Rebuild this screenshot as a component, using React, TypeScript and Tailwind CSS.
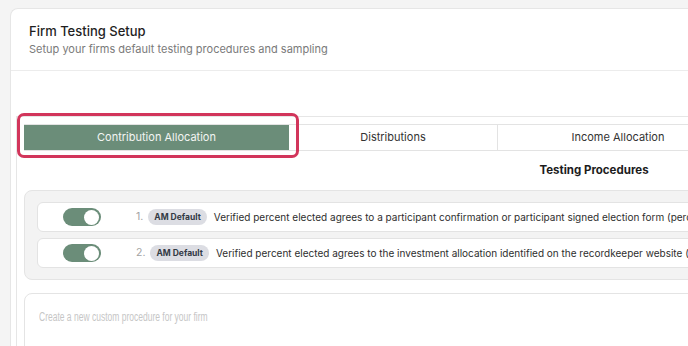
export default function App() {
  const rows = [
    "Verified percent elected agrees to a participant confirmation or participant signed election form (percent elected should agree with contribution allocation percentages)",
    "Verified percent elected agrees to the investment allocation identified on the recordkeeper website (percent elected should agree with contribution allocation percentages)",
  ];

  return (
    <div
      className="relative h-[346px] w-[688px] overflow-hidden bg-[#f4f4f4] pl-[10px] pt-[8px]"
      style={{ fontFamily: "Inter, 'Noto Sans', sans-serif" }}
    >
      <div className="w-[1200px] rounded-tl-lg border-l border-t border-[#e6e6e6] bg-white">
        <div className="border-b border-[#ececec] px-[18px] pb-[12px] pt-[13px]">
          <h1 className="text-[13px] font-medium leading-[18px] text-[#1f1f1f]">Firm Testing Setup</h1>
          <p className="text-[11px] leading-[18px] text-[#7a7a7a]">
            Setup your firms default testing procedures and sampling
          </p>
        </div>

        <div className="pl-[5px] pt-[45px]">
          <div className="border-l border-t border-[#e6e6e6] pl-[7px] pt-[7px]">
            <div className="flex h-[27px] w-[1140px] border-y border-[#e3e3e3] text-[11px]">
              <div className="flex w-[265px] items-center justify-center bg-[#6b8d79] text-[#f3f5f3]">
                Contribution Allocation
              </div>
              <div className="flex w-[209px] items-center justify-center border-r border-[#e3e3e3] text-[#333]">
                Distributions
              </div>
              <div className="flex w-[240px] items-center justify-center text-[#333]">Income Allocation</div>
            </div>

            <div className="flex h-[39px] w-[1140px] items-center justify-center pt-[1px] text-[11.5px] font-bold text-[#1c1c1c]">
              Testing Procedures
            </div>

            <div className="w-[1140px] rounded-lg border border-[#e4e4e4] bg-[#f3f3f3] px-[12px] py-[11px]">
              <div className="flex flex-col gap-[6px]">
                {rows.map((text, i) => (
                  <div
                    key={i}
                    className="flex h-[30px] items-center rounded-md border border-[#e3e3e3] bg-white pl-[25px]"
                  >
                    <div className="flex h-[18px] w-[38px] items-center justify-end rounded-full bg-[#6b8d79] pr-[2px]">
                      <div className="h-[15px] w-[15px] rounded-full bg-white" />
                    </div>
                    <span className="ml-[35px] text-[10.5px] text-[#a3a3a3]">{i + 1}.</span>
                    <span className="ml-[5px] rounded-full bg-[#dcdde3] px-[6px] py-[2px] text-[8.5px] font-bold leading-[12px] text-[#333a45]">
                      AM Default
                    </span>
                    <span className="ml-[7px] whitespace-nowrap text-[10px] text-[#2e2e2e]">{text}</span>
                  </div>
                ))}
              </div>
            </div>

            <div className="mt-[13px] h-[80px] w-[1140px] rounded-tl-lg border border-[#e4e4e4] bg-white px-[14px] pt-[9px]">
              <span
                className="inline-block origin-left scale-x-[0.68] text-[12.5px] leading-[16px] text-[#c6c6c6]"
                style={{ fontFamily: "'Liberation Sans', sans-serif" }}
              >
                Create a new custom procedure for your firm
              </span>
            </div>
          </div>
        </div>
      </div>

      <div className="pointer-events-none absolute left-[17px] top-[113px] h-[45px] w-[282px] rounded-[7px] border-[3px] border-[#d2355b]" />
    </div>
  );
}
